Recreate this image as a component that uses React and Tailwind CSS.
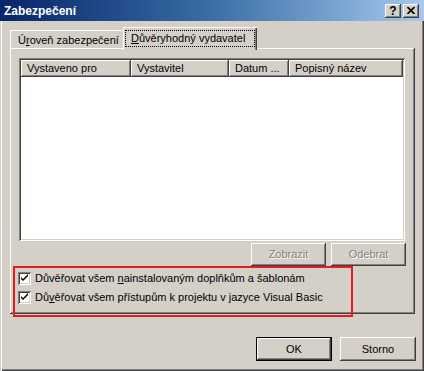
import React from 'react';

const raised = 'shadow-[inset_-1px_-1px_#404040,inset_1px_1px_#ffffff,inset_-2px_-2px_#808080,inset_2px_2px_#d4d0c8]';
const sunken = 'shadow-[inset_1px_1px_#808080,inset_-1px_-1px_#ffffff,inset_2px_2px_#404040,inset_-2px_-2px_#d4d0c8]';

const TitleButton = ({ children }) => (
    <div className={`w-[16px] h-[14px] bg-[#d4d0c8] flex items-center justify-center ${raised}`}>
        {children}
    </div>
);

const Button = ({ children, disabled, isDefault, className = '' }) => (
    <div
        className={`h-[23px] w-[75px] flex items-center justify-center bg-[#d4d0c8] ${isDefault
            ? 'border border-black shadow-[inset_-1px_-1px_#404040,inset_1px_1px_#ffffff,inset_-2px_-2px_#808080]'
            : raised
            } ${disabled ? 'text-[#808080] [text-shadow:1px_1px_#ffffff]' : 'text-black'} ${className}`}
    >
        {children}
    </div>
);

const Checkbox = () => (
    <div className={`w-[13px] h-[13px] bg-white shrink-0 ${sunken}`}>
        <svg width="13" height="13" viewBox="0 0 13 13">
            <path d="M3 5 L3 7 L5 9 L10 4 L10 2 L5 7 Z" fill="#000" />
        </svg>
    </div>
);

const columns = [
    { label: 'Vystaveno pro', width: 'w-[110px]' },
    { label: 'Vystavitel', width: 'w-[98px]' },
    { label: 'Datum ...', width: 'w-[60px]' },
    { label: 'Popisný název', width: 'flex-1' }
];

const App = () => {
    return (
        <div
            className="relative w-[424px] h-[371px] bg-[#d4d0c8] flex flex-col text-[11px] text-black shadow-[inset_1px_1px_#d4d0c8,inset_2px_2px_#ffffff,inset_-1px_-1px_#404040,inset_-2px_-2px_#808080]"
            style={{ fontFamily: '"Liberation Sans", Arial, sans-serif' }}
        >
            {/* title bar */}
            <div className="h-[21px] flex items-center justify-between pl-[4px] pr-[5px] bg-gradient-to-r from-[#0a246a] via-[#3a6ea5] to-[#a6caf0]">
                <span className="text-white font-bold text-[12px]">Zabezpečení</span>
                <div className="flex gap-[2px]">
                    <TitleButton>
                        <span className="font-bold text-[12px] leading-none">?</span>
                    </TitleButton>
                    <TitleButton>
                        <svg width="8" height="7" viewBox="0 0 8 7">
                            <path d="M0.5 0 L7.5 7 M7.5 0 L0.5 7" stroke="#000" strokeWidth="1.6" />
                        </svg>
                    </TitleButton>
                </div>
            </div>

            {/* tabs */}
            <div className="mt-[6px] ml-[10px] h-[21px] flex items-end">
                <div className="h-[18px] w-[115px] pl-[8px] pt-[2px] shadow-[inset_1px_1px_#ffffff,inset_-1px_0_#404040,inset_-2px_0_#808080]">
                    Ú<span className="underline">r</span>oveň zabezpečení
                </div>
                <div className="relative z-10 -mb-[2px] h-[23px] w-[134px] -ml-[2px] px-[2px] pt-[3px] bg-[#d4d0c8] shadow-[inset_1px_1px_#ffffff,inset_-1px_0_#404040,inset_-2px_0_#808080]">
                    <div className="h-[17px] border border-dotted border-black flex items-center pl-[5px]">
                        <span className="underline">D</span>ůvěryhodný vydavatel
                    </div>
                </div>
            </div>

            {/* tab panel */}
            <div className={`ml-[10px] w-[405px] h-[266px] px-[9px] pt-[10px] flex flex-col ${raised}`}>
                <div className={`w-[386px] h-[183px] bg-white p-[2px] ${sunken}`}>
                    <div className="flex h-[17px] bg-[#d4d0c8]">
                        {columns.map((col, index) => (
                            <div
                                key={index}
                                className={`${col.width} h-full flex items-center pl-[6px] shadow-[inset_-1px_-1px_#404040,inset_1px_1px_#ffffff,inset_-2px_-2px_#808080]`}
                            >
                                {col.label}
                            </div>
                        ))}
                    </div>
                </div>

                <div className="flex justify-end gap-[5px] mt-[2px]">
                    <Button disabled>Zobrazit</Button>
                    <Button disabled>Odebrat</Button>
                </div>

                <div className="mt-[3px] -ml-[1px] flex flex-col">
                    <div className="h-[19px] flex items-center gap-[4px]">
                        <Checkbox />
                        <span>Důvěřovat všem <span className="underline">n</span>ainstalovaným doplňkům a šablonám</span>
                    </div>
                    <div className="h-[19px] flex items-center gap-[4px]">
                        <Checkbox />
                        <span>Dů<span className="underline">v</span>ěřovat všem přístupům k projektu v jazyce Visual Basic</span>
                    </div>
                </div>
            </div>

            {/* dialog buttons */}
            <div className="mt-[23px] flex justify-end gap-[8px] pr-[8px]">
                <Button isDefault className="w-[76px] h-[24px]">OK</Button>
                <Button className="w-[76px] h-[24px]">Storno</Button>
            </div>

            {/* red annotation frame */}
            <div className="absolute left-[13px] top-[266px] w-[340px] h-[51px] border-2 border-[#e41b23] pointer-events-none" />
        </div>
    );
};

export default App;
